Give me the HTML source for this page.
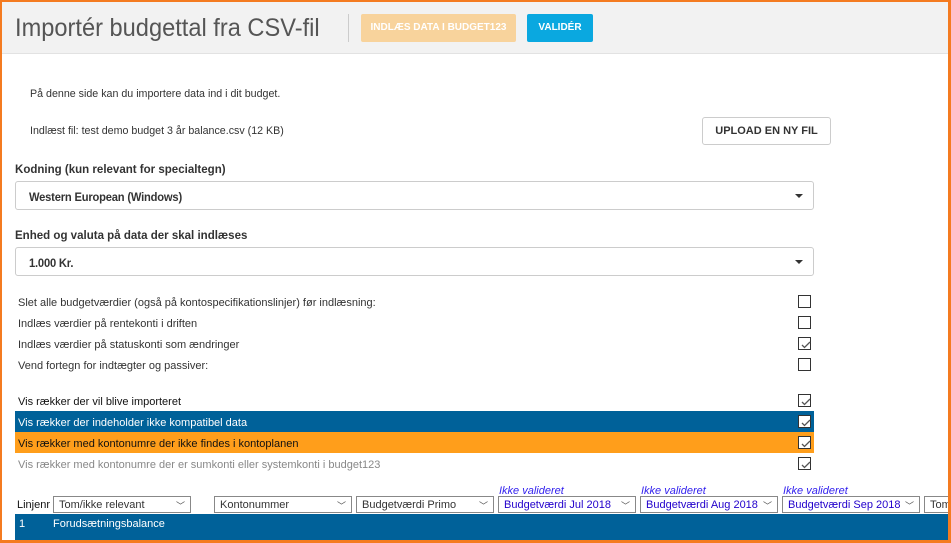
<!DOCTYPE html>
<html><head><meta charset="utf-8"><style>
*{margin:0;padding:0;box-sizing:border-box}
body{width:951px;height:543px;overflow:hidden;background:#fff;font-family:"Liberation Sans",Arial,sans-serif;position:relative;color:#333}
.a{position:absolute;white-space:nowrap}
.t{font-size:11px;color:#333}
.cb{position:absolute;left:798px;width:13px;height:13px;border:1px solid #333;background:#fff}
.cb svg{position:absolute;left:1px;top:1px}
.sel{position:absolute;height:29px;left:15px;width:799px;border:1px solid #ccc;border-radius:3px;background:#fff}
.sel span{position:absolute;left:13px;top:8px;font-size:12px;font-weight:bold;color:#333;letter-spacing:-0.2px;transform:scaleX(0.93);transform-origin:left}
.car{position:absolute;right:10px;top:12px;width:0;height:0;border-left:4px solid transparent;border-right:4px solid transparent;border-top:4px solid #333}
.ss{position:absolute;top:496px;height:17px;border:1px solid #888;background:#fff;font-size:11px;padding:2px 0 0 5px;white-space:nowrap;overflow:hidden}
.ss i{position:absolute;right:5px;top:2px;font-style:normal;font-size:9px;color:#555}
.bl{color:#2200cc}
.iv{position:absolute;top:485px;font-size:11px;font-style:italic;color:#3322ee}
.h{position:absolute;left:15px;font-size:12px;font-weight:bold;transform:scaleX(0.96);transform-origin:left;white-space:nowrap}
</style></head><body>
<div class="a" style="left:0;top:0;width:951px;height:54px;background:#f2f2f2;border-bottom:1px solid #e2e2e2"></div>
<div class="a" style="left:15px;top:14px;font-size:25px;color:#555;transform:scaleX(0.945);transform-origin:left">Importér budgettal fra CSV-fil</div>
<div class="a" style="left:348px;top:14px;width:1px;height:28px;background:#ccc"></div>
<div class="a" style="left:361px;top:14px;width:155px;height:28px;background:#f8d39c;border-radius:2px;color:#fff;font-size:10px;font-weight:bold;text-align:center;line-height:28px">INDLÆS DATA I BUDGET123</div>
<div class="a" style="left:527px;top:14px;width:66px;height:28px;background:#0aa8e0;border-radius:2px;color:#fff;font-size:10px;font-weight:bold;text-align:center;line-height:28px">VALIDÉR</div>

<div class="a t" style="left:30px;top:88px;transform:scaleX(0.97);transform-origin:left">På denne side kan du importere data ind i dit budget.</div>
<div class="a t" style="left:30px;top:125px;transform:scaleX(0.97);transform-origin:left">Indlæst fil: test demo budget 3 år balance.csv (12 KB)</div>
<div class="a" style="left:702px;top:117px;width:129px;height:28px;border:1px solid #ccc;border-radius:3px;font-size:11px;font-weight:bold;color:#333;text-align:center;line-height:26px">UPLOAD EN NY FIL</div>

<div class="h" style="top:162px">Kodning (kun relevant for specialtegn)</div>
<div class="sel" style="top:181px"><span>Western European (Windows)</span><div class="car"></div></div>
<div class="h" style="top:228px">Enhed og valuta på data der skal indlæses</div>
<div class="sel" style="top:247px"><span>1.000 Kr.</span><div class="car"></div></div>

<div class="a t" style="left:18px;top:297px">Slet alle budgetværdier (også på kontospecifikationslinjer) før indlæsning:</div>
<div class="a t" style="left:18px;top:318px">Indlæs værdier på rentekonti i driften</div>
<div class="a t" style="left:18px;top:339px">Indlæs værdier på statuskonti som ændringer</div>
<div class="a t" style="left:18px;top:360px">Vend fortegn for indtægter og passiver:</div>
<div class="cb" style="top:295px"></div>
<div class="cb" style="top:316px"></div>
<div class="cb" style="top:337px"><svg width="11" height="11"><path d="M2 6l2.5 2.5L10 3" fill="none" stroke="#555" stroke-width="1.3"/></svg></div>
<div class="cb" style="top:358px"></div>

<div class="a" style="left:15px;top:411px;width:799px;height:21px;background:#006199"></div>
<div class="a" style="left:15px;top:432px;width:799px;height:21px;background:#ff9e1b"></div>
<div class="a t" style="left:18px;top:396px;color:#111">Vis rækker der vil blive importeret</div>
<div class="a t" style="left:18px;top:417px;color:#fff">Vis rækker der indeholder ikke kompatibel data</div>
<div class="a t" style="left:18px;top:438px;color:#111">Vis rækker med kontonumre der ikke findes i kontoplanen</div>
<div class="a t" style="left:18px;top:459px;color:#888">Vis rækker med kontonumre der er sumkonti eller systemkonti i budget123</div>
<div class="cb" style="top:394px"><svg width="11" height="11"><path d="M2 6l2.5 2.5L10 3" fill="none" stroke="#555" stroke-width="1.3"/></svg></div>
<div class="cb" style="top:415px"><svg width="11" height="11"><path d="M2 6l2.5 2.5L10 3" fill="none" stroke="#555" stroke-width="1.3"/></svg></div>
<div class="cb" style="top:436px"><svg width="11" height="11"><path d="M2 6l2.5 2.5L10 3" fill="none" stroke="#555" stroke-width="1.3"/></svg></div>
<div class="cb" style="top:457px"><svg width="11" height="11"><path d="M2 6l2.5 2.5L10 3" fill="none" stroke="#555" stroke-width="1.3"/></svg></div>

<div class="a t" style="left:17px;top:499px;color:#111">Linjenr</div>
<div class="ss" style="left:53px;width:138px">Tom/ikke relevant<i>﹀</i></div>
<div class="ss" style="left:214px;width:138px">Kontonummer<i>﹀</i></div>
<div class="ss" style="left:356px;width:138px">Budgetværdi Primo<i>﹀</i></div>
<div class="iv" style="left:499px">Ikke valideret</div>
<div class="iv" style="left:641px">Ikke valideret</div>
<div class="iv" style="left:783px">Ikke valideret</div>
<div class="ss bl" style="left:498px;width:138px">Budgetværdi Jul 2018<i>﹀</i></div>
<div class="ss bl" style="left:640px;width:138px">Budgetværdi Aug 2018<i>﹀</i></div>
<div class="ss bl" style="left:782px;width:138px">Budgetværdi Sep 2018<i>﹀</i></div>
<div class="ss" style="left:924px;width:40px">Tom</div>

<div class="a" style="left:15px;top:514px;width:936px;height:29px;background:#006199"></div>
<div class="a" style="left:19px;top:518px;font-size:11px;color:#fff">1</div>
<div class="a" style="left:53px;top:518px;font-size:11px;color:#fff">Forudsætningsbalance</div>

<div class="a" style="left:0;top:0;width:951px;height:2px;background:#f47b20"></div>
<div class="a" style="left:0;top:0;width:2px;height:543px;background:#f47b20"></div>
<div class="a" style="left:948px;top:0;width:3px;height:543px;background:#f47b20"></div>
<div class="a" style="left:0;top:540px;width:951px;height:3px;background:#f47b20"></div>
</body></html>
